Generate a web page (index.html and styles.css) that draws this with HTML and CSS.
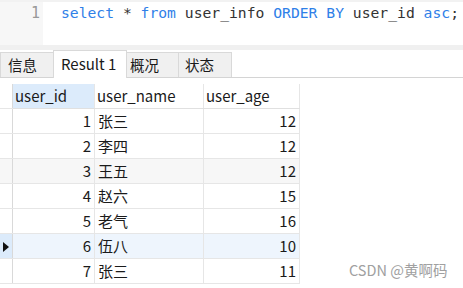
FILE: index.html
```html
<!DOCTYPE html>
<html lang="zh-CN">
<head>
    <meta charset="UTF-8">
    <title>user_info</title>
    <link rel="stylesheet" href="styles.css">
</head>
<body>
    <div class="editor">
        <div class="gutter">1</div>
        <div class="code"><span class="kw">select</span> * <span class="kw">from</span> user_info <span class="kw">ORDER BY</span> user_id <span class="kw">asc</span>;</div>
    </div>
    <div class="splitter"></div>

    <div class="tabs">
        <div class="tab t-info">信息</div>
        <div class="tab active t-result">Result 1</div>
        <div class="tab t-overview">概况</div>
        <div class="tab t-status">状态</div>
    </div>

    <table class="grid">
        <tr class="head">
            <th class="ind"></th>
            <th class="c-id sorted">user_id</th>
            <th class="c-name">user_name</th>
            <th class="c-age">user_age</th>
        </tr>
        <tr><td class="ind"></td><td class="num">1</td><td>张三</td><td class="num">12</td></tr>
        <tr><td class="ind"></td><td class="num">2</td><td>李四</td><td class="num">12</td></tr>
        <tr class="alt"><td class="ind"></td><td class="num">3</td><td>王五</td><td class="num">12</td></tr>
        <tr><td class="ind"></td><td class="num">4</td><td>赵六</td><td class="num">15</td></tr>
        <tr><td class="ind"></td><td class="num">5</td><td>老气</td><td class="num">16</td></tr>
        <tr class="current"><td class="ind"><span class="arrow"></span></td><td class="num">6</td><td>伍八</td><td class="num">10</td></tr>
        <tr><td class="ind"></td><td class="num">7</td><td>张三</td><td class="num">11</td></tr>
    </table>

    <div class="watermark">CSDN @黄啊码</div>
</body>
</html>
```

FILE: styles.css
```css
body {
    margin: 0;
    width: 463px;
    height: 288px;
    overflow: hidden;
    position: relative;
    background: #fff;
    font-family: "Noto Sans CJK SC", "Noto Sans", sans-serif;
    color: #1a1a1a;
}

/* sql editor */
.editor {
    display: flex;
    height: 45px;
    border-top: 2px solid #f2f2f2;
    box-sizing: border-box;
}
.gutter {
    flex: none;
    width: 43px;
    background: #f7f7f7;
    color: #999;
    text-align: right;
    padding-right: 3px;
    box-sizing: border-box;
    font-family: "DejaVu Sans Mono", monospace;
    font-size: 15px;
    line-height: 22px;
}
.code {
    padding-left: 18px;
    white-space: nowrap;
    font-family: "DejaVu Sans Mono", monospace;
    font-size: 14.7px;
    line-height: 22px;
    color: #333;
}
.kw {
    color: #2f80e8;
}
.splitter {
    height: 5px;
    background: #f0f0f0;
}

/* result tabs */
.tabs {
    display: flex;
    align-items: flex-end;
    height: 28px;
    border-bottom: 1px solid #d4d4d4;
    box-sizing: border-box;
    font-size: 14.5px;
}
.tab {
    height: 25px;
    box-sizing: border-box;
    border: 1px solid #d9d9d9;
    border-bottom: none;
    background: #f0f0f0;
    padding-left: 7px;
    line-height: 23px;
    margin-right: -1px;
}
.tab.active {
    height: 28px;
    margin-bottom: -1px;
    background: #fff;
    line-height: 26px;
    font-size: 15px;
}
.t-info { width: 54px; }
.t-result { width: 74px; }
.t-overview { width: 53px; padding-left: 3px; }
.t-status { width: 54px; padding-left: 6px; }

/* data grid */
.grid {
    margin-top: 6px;
    border-collapse: collapse;
    font-size: 15px;
    table-layout: fixed;
}
.grid th,
.grid td {
    height: 24px;
    padding: 0 3px;
    border: 1px solid #e6e6e6;
    border-top: none;
    white-space: nowrap;
    line-height: 24px;
}
.grid th {
    font-weight: normal;
    text-align: left;
    padding-left: 2px;
    border-bottom-color: #e0e0e0;
    height: 23px;
}
.grid .ind {
    width: 12px;
    padding: 0;
    border-left: none;
    border-right-color: #d9d9d9;
}
.grid .head .ind {
    border-bottom-color: #e6e6e6;
}
.c-id { width: 76px; }
.c-name { width: 103px; }
.c-age { width: 90px; }
.sorted {
    background: #dcebfb;
}
.num {
    text-align: right;
}
.alt td {
    background: #f7f7f7;
}
.current td {
    background: #eef5fd;
}
.current .ind {
    background: #dcebfb;
    position: relative;
}
.arrow {
    position: absolute;
    left: 3px;
    top: 8px;
    border-left: 6px solid #111;
    border-top: 5px solid transparent;
    border-bottom: 5px solid transparent;
}

.watermark {
    position: absolute;
    left: 349px;
    top: 259px;
    font-size: 14.5px;
    color: #a0a0a0;
}
```
